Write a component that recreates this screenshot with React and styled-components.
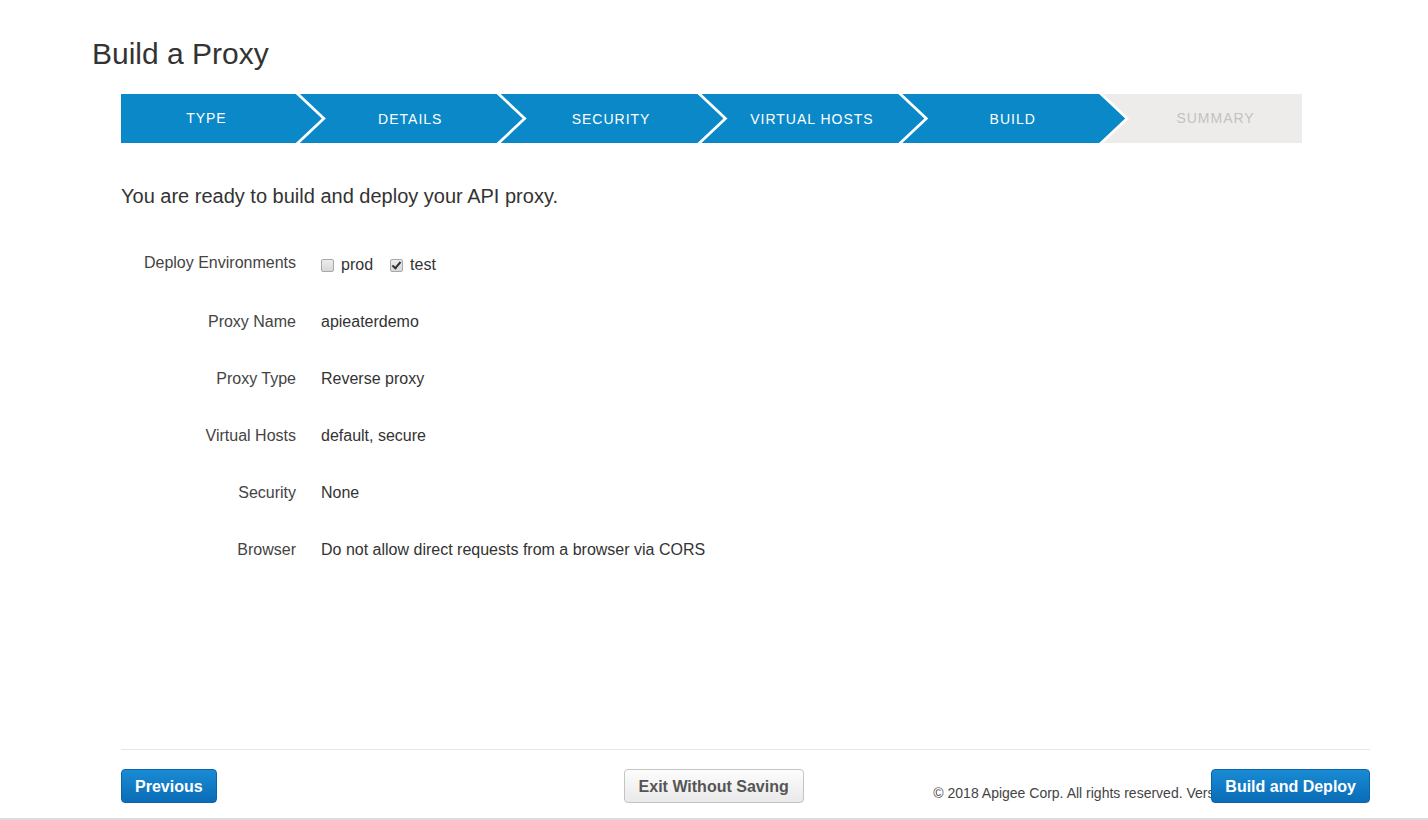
import React from "react";
import styled, { createGlobalStyle, css } from "styled-components";

const GlobalStyle = createGlobalStyle`
  html, body { margin: 0; padding: 0; background: #fff; }
  body { font-family: "Liberation Sans", Arial, sans-serif; color: #333; }
  * { box-sizing: border-box; }
`;

const Page = styled.div`
  display: flex;
  flex-direction: column;
  padding: 0 58px 0 92px;
  border-bottom: 2px solid #dcdcdc;
  height: 820px;
`;

const Title = styled.h1`
  margin: 37px 0 0;
  font-size: 30px;
  line-height: 33px;
  font-weight: normal;
  color: #333;
`;

const Body = styled.div`
  margin-left: 29px;
  display: flex;
  flex-direction: column;
  flex: 1;
`;

const Stepper = styled.div`
  display: flex;
  width: 1181px;
  height: 49px;
  margin-top: 24px;
`;

const ARROW = 26;

const Step = styled.div`
  height: 49px;
  display: flex;
  align-items: center;
  justify-content: center;
  font-size: 14px;
  letter-spacing: 1px;
  text-transform: uppercase;
  padding-bottom: 1px;
  background: ${(p) => (p.$done ? "#0a88c8" : "#edecea")};
  color: ${(p) => (p.$done ? "#fff" : "#c2c2c2")};
  ${(p) =>
    p.$pos === "first"
      ? css`
          width: 201px;
          padding-right: ${ARROW + 4}px;
          clip-path: polygon(0 0, calc(100% - ${ARROW}px) 0, 100% 50%, calc(100% - ${ARROW}px) 100%, 0 100%);
        `
      : p.$pos === "last"
      ? css`
          width: 199px;
          margin-left: -22px;
          padding-left: ${ARROW}px;
          clip-path: polygon(0 0, 100% 0, 100% 100%, 0 100%, ${ARROW}px 50%);
        `
      : css`
          width: 223px;
          margin-left: -22px;
          padding: 0 ${ARROW + 2}px 0 ${ARROW}px;
          clip-path: polygon(0 0, calc(100% - ${ARROW}px) 0, 100% 50%, calc(100% - ${ARROW}px) 100%, 0 100%, ${ARROW}px 50%);
        `}
`;

const Intro = styled.p`
  margin: 41px 0 0;
  font-size: 20px;
  line-height: 24px;
  color: #333;
`;

const Summary = styled.div`
  display: grid;
  grid-template-columns: 175px 1fr;
  column-gap: 25px;
  row-gap: 37px;
  margin-top: 47px;
  align-items: center;
`;

const Label = styled.div`
  text-align: right;
  font-size: 16px;
  line-height: 20px;
  color: #444;
  ${(p) => p.$raised && css`transform: translateY(-2px);`}
`;

const Value = styled.div`
  font-size: 16px;
  line-height: 20px;
  color: #333;
  display: flex;
  align-items: center;
`;

const CheckLabel = styled.label`
  display: inline-flex;
  align-items: center;
  margin-right: 17px;
  font-size: 16px;
  color: #333;
`;

const Box = styled.input`
  appearance: none;
  -webkit-appearance: none;
  width: 13px;
  height: 13px;
  margin: 0 7px 0 0;
  border: 1px solid #a8a8a8;
  border-radius: 2px;
  background: linear-gradient(#ececec, #d8d8d8);
  position: relative;
  &:checked::after {
    content: "";
    position: absolute;
    left: 3px;
    top: 0px;
    width: 3px;
    height: 7px;
    border: solid #333;
    border-width: 0 2px 2px 0;
    transform: rotate(40deg);
  }
`;

const Spacer = styled.div`
  flex: 1;
`;

const Footer = styled.div`
  border-top: 1px solid #e6e6e6;
  padding: 19px 0 15px;
  display: flex;
  align-items: stretch;
`;

const Button = styled.button`
  height: 34px;
  padding: 2px 13px 0;
  border-radius: 4px;
  font-family: "Liberation Sans", Arial, sans-serif;
  font-weight: bold;
  font-size: 16px;
  cursor: pointer;
  white-space: nowrap;
  ${(p) =>
    p.$primary
      ? css`
          color: #fff;
          background: linear-gradient(#198bd4, #0a6cb6);
          border: 1px solid #0a64aa;
        `
      : css`
          color: #555;
          background: linear-gradient(#fdfdfd, #e9e9e9);
          border: 1px solid #c4c4c4;
          padding: 2px 14px 0;
        `}
`;

const ExitButton = styled(Button)`
  margin-left: 407px;
`;

const RightGroup = styled.div`
  margin-left: auto;
  display: flex;
  align-items: flex-end;
`;

const Copyright = styled.span`
  width: 278px;
  overflow: hidden;
  white-space: nowrap;
  font-size: 14px;
  line-height: 16px;
  color: #444;
  margin-bottom: 2px;
`;

const steps = ["Type", "Details", "Security", "Virtual Hosts", "Build", "Summary"];

const rows = [
  ["Proxy Name", "apieaterdemo"],
  ["Proxy Type", "Reverse proxy"],
  ["Virtual Hosts", "default, secure"],
  ["Security", "None"],
  ["Browser", "Do not allow direct requests from a browser via CORS"],
];

export default function App() {
  return (
    <>
      <GlobalStyle />
      <Page>
        <Title>Build a Proxy</Title>
        <Body>
          <Stepper>
            {steps.map((s, i) => (
              <Step
                key={s}
                $pos={i === 0 ? "first" : i === steps.length - 1 ? "last" : "mid"}
                $done={i < steps.length - 1}
              >
                {s}
              </Step>
            ))}
          </Stepper>
          <Intro>You are ready to build and deploy your API proxy.</Intro>
          <Summary>
            <Label $raised>Deploy Environments</Label>
            <Value>
              <CheckLabel>
                <Box type="checkbox" />
                prod
              </CheckLabel>
              <CheckLabel>
                <Box type="checkbox" defaultChecked />
                test
              </CheckLabel>
            </Value>
            {rows.map(([l, v]) => (
              <React.Fragment key={l}>
                <Label>{l}</Label>
                <Value>{v}</Value>
              </React.Fragment>
            ))}
          </Summary>
          <Spacer />
          <Footer>
            <Button $primary>Previous</Button>
            <ExitButton>Exit Without Saving</ExitButton>
            <RightGroup>
              <Copyright>© 2018 Apigee Corp. All rights reserved. Version</Copyright>
              <Button $primary>Build and Deploy</Button>
            </RightGroup>
          </Footer>
        </Body>
      </Page>
    </>
  );
}
